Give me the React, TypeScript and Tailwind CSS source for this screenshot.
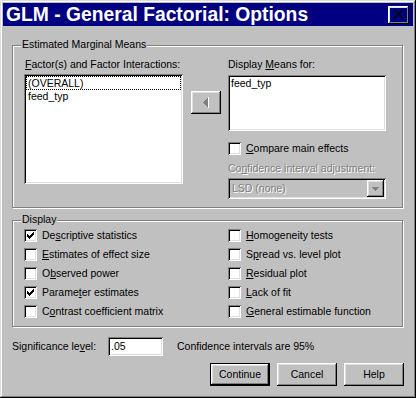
import type { ReactNode } from "react";

const raised =
  "shadow-[inset_-1px_-1px_0_#000,inset_1px_1px_0_#fff,inset_-2px_-2px_0_#808080,inset_2px_2px_0_#dfdfdf]";
const sunken =
  "shadow-[inset_1px_1px_0_#808080,inset_-1px_-1px_0_#fff,inset_2px_2px_0_#000,inset_-2px_-2px_0_#dfdfdf]";

function U({ children }: { children: ReactNode }) {
  return <span className="underline underline-offset-[1px]">{children}</span>;
}

function CheckBox({ checked }: { checked?: boolean }) {
  const starts = [2, 3, 4, 3, 2, 1, 0];
  return (
    <span className={`relative block h-[13px] w-[13px] shrink-0 bg-white ${sunken}`}>
      {checked && (
        <svg width="13" height="13" className="absolute left-0 top-0" shapeRendering="crispEdges">
          {starts.map((s, i) => (
            <rect key={i} x={3 + i} y={3 + s} width="1" height="3" fill="#000" />
          ))}
        </svg>
      )}
    </span>
  );
}

function CheckRow({ checked, children }: { checked?: boolean; children: ReactNode }) {
  return (
    <div className="flex h-[19px] items-center gap-[5px]">
      <CheckBox checked={checked} />
      <span className="whitespace-nowrap leading-[13px]">{children}</span>
    </div>
  );
}

function GroupBox({ title, className, children }: { title: string; className: string; children: ReactNode }) {
  return (
    <div className={`relative border border-[#808080] shadow-[inset_1px_1px_0_#fff,1px_1px_0_#fff] ${className}`}>
      <span className="absolute left-[8px] top-[-8px] whitespace-nowrap bg-[#c0c0c0] px-[1px] leading-[13px]">
        {title}
      </span>
      {children}
    </div>
  );
}

function Button({ label, isDefault }: { label: string; isDefault?: boolean }) {
  return (
    <div className={`h-[23px] w-[60px] ${isDefault ? "border border-black" : ""}`}>
      <div className={`flex h-full w-full items-center justify-center ${raised}`}>{label}</div>
    </div>
  );
}

export default function App() {
  const disabled = "text-[#808080] [text-shadow:1px_1px_0_#fff]";
  return (
    <div
      className="flex h-[398px] w-[416px] flex-col bg-[#c0c0c0] p-[3px] text-[10.5px] leading-[13px] text-black shadow-[inset_-1px_-1px_0_#000,inset_1px_1px_0_#dfdfdf,inset_-2px_-2px_0_#808080,inset_2px_2px_0_#fff]"
      style={{ fontFamily: '"Liberation Sans", Arial, sans-serif' }}
    >
      <div className="flex h-[23px] items-center justify-between bg-[#000080] pl-[3px] pr-[4px]">
        <span className="whitespace-nowrap text-[19.3px] font-bold leading-[23px] text-white">
          GLM - General Factorial: Options
        </span>
        <div className={`flex h-[18px] w-[21px] items-center justify-center ${raised}`}>
          <svg width="11" height="10" viewBox="0 0 11 10" shapeRendering="crispEdges">
            <path d="M1 0L10 9M2 0L11 9M10 0L1 9M9 0L0 9" stroke="#000" strokeWidth="1.2" />
          </svg>
        </div>
      </div>

      <div className="flex flex-col px-[9px]">
        <GroupBox title="Estimated Marginal Means" className="mt-[19px] h-[163px] w-[391px]">
          <div className="flex pt-[12px]">
            <div className="ml-[11px] flex w-[159px] flex-col">
              <span className="whitespace-nowrap pl-[1px]">
                <U>F</U>actor(s) and Factor Interactions:
              </span>
              <div className={`mt-[3px] h-[110px] bg-white p-[2px] ${sunken}`}>
                <div className="h-[14px] border border-dotted border-black px-[1px] leading-[12px]">(OVERALL)</div>
                <div className="h-[13px] px-[2px] leading-[13px]">feed_typ</div>
              </div>
            </div>
            <div className={`ml-[8px] mt-[33px] flex h-[23px] w-[30px] items-center justify-center ${raised}`}>
              <svg width="6" height="11" viewBox="0 0 6 11" shapeRendering="crispEdges">
                <polygon points="5,0 0,5.5 5,11" fill="#808080" />
                <path d="M5.5 0V11" stroke="#fff" strokeWidth="1" />
              </svg>
            </div>
            <div className="ml-[7px] flex w-[158px] flex-col">
              <span className="whitespace-nowrap">
                Display <U>M</U>eans for:
              </span>
              <div className={`mt-[4px] h-[56px] bg-white px-[3px] py-[2px] ${sunken}`}>feed_typ</div>
              <div className="mt-[11px] flex items-center gap-[5px]">
                <CheckBox />
                <span className="whitespace-nowrap">
                  <U>C</U>ompare main effects
                </span>
              </div>
              <span className={`mt-[7px] whitespace-nowrap ${disabled}`}>
                Co<U>n</U>fidence interval adjustment:
              </span>
              <div className={`mt-[3px] flex h-[21px] items-center justify-between bg-[#c0c0c0] pl-[4px] pr-[2px] ${sunken}`}>
                <span className={disabled}>LSD (none)</span>
                <div className={`flex h-[17px] w-[17px] items-center justify-center ${raised}`}>
                  <svg width="7" height="4" viewBox="0 0 7 4" shapeRendering="crispEdges">
                    <polygon points="0,0 7,0 3.5,4" fill="#808080" />
                  </svg>
                </div>
              </div>
            </div>
          </div>
        </GroupBox>

        <GroupBox title="Display" className="mt-[12px] h-[107px] w-[391px]">
          <div className="flex pt-[5px]">
            <div className="ml-[11px] flex w-[204px] flex-col">
              <CheckRow checked>
                De<U>s</U>criptive statistics
              </CheckRow>
              <CheckRow>
                <U>E</U>stimates of effect size
              </CheckRow>
              <CheckRow>
                O<U>b</U>served power
              </CheckRow>
              <CheckRow checked>
                Parame<U>t</U>er estimates
              </CheckRow>
              <CheckRow>
                C<U>o</U>ntrast coefficient matrix
              </CheckRow>
            </div>
            <div className="flex flex-col">
              <CheckRow>
                <U>H</U>omogeneity tests
              </CheckRow>
              <CheckRow>
                S<U>p</U>read vs. level plot
              </CheckRow>
              <CheckRow>
                <U>R</U>esidual plot
              </CheckRow>
              <CheckRow>
                <U>L</U>ack of fit
              </CheckRow>
              <CheckRow>
                <U>G</U>eneral estimable function
              </CheckRow>
            </div>
          </div>
        </GroupBox>

        <div className="mt-[10px] flex items-center">
          <span className="w-[96px] whitespace-nowrap">
            Significance le<U>v</U>el:
          </span>
          <div className={`flex h-[19px] w-[55px] items-center bg-white px-[3px] ${sunken}`}>.05</div>
          <span className="ml-[14px] whitespace-nowrap">Confidence intervals are 95%</span>
        </div>

        <div className="mt-[7px] flex justify-end gap-[7px]">
          <Button label="Continue" isDefault />
          <Button label="Cancel" />
          <Button label="Help" />
        </div>
      </div>
    </div>
  );
}
